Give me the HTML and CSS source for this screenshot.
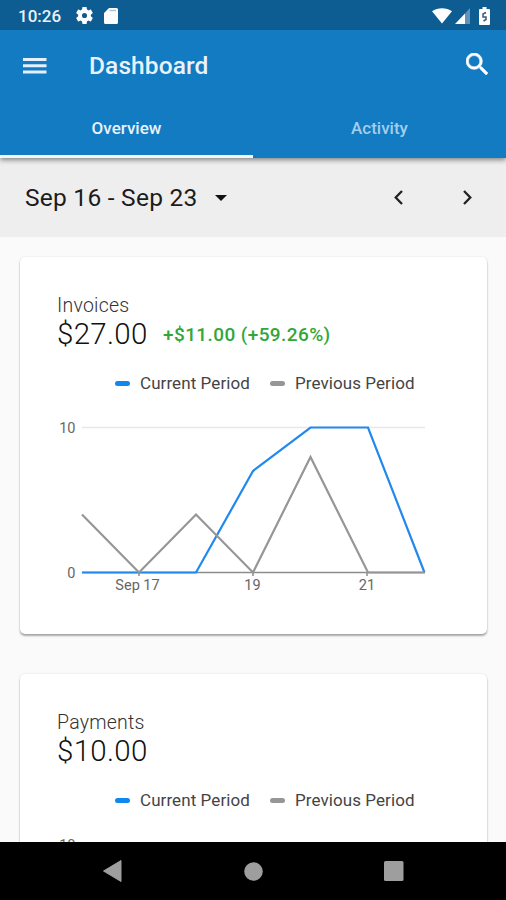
FILE: index.html
```html
<!DOCTYPE html>
<html lang="en">
<head>
    <meta charset="UTF-8">
    <meta name="viewport" content="width=device-width, initial-scale=1.0">
    <title>Dashboard</title>
    <link rel="stylesheet" href="styles.css">
</head>
<body>

<div class="screen">
    <div class="status-bar">
        <span class="time">10:26</span>
        <svg class="gear" width="17" height="17" viewBox="2 2 20 20"><path fill="#fff" d="M19.43 12.98c.04-.32.07-.64.07-.98s-.03-.66-.07-.98l2.11-1.65c.19-.15.24-.42.12-.64l-2-3.46c-.12-.22-.39-.3-.61-.22l-2.49 1c-.52-.4-1.08-.73-1.69-.98l-.38-2.65C14.46 2.18 14.25 2 14 2h-4c-.25 0-.46.18-.49.42l-.38 2.65c-.61.25-1.17.59-1.69.98l-2.49-1c-.23-.09-.49 0-.61.22l-2 3.46c-.13.22-.07.49.12.64l2.11 1.65c-.04.32-.07.65-.07.98s.03.66.07.98l-2.11 1.65c-.19.15-.24.42-.12.64l2 3.46c.12.22.39.3.61.22l2.49-1c.52.4 1.08.73 1.69.98l.38 2.65c.03.24.24.42.49.42h4c.25 0 .46-.18.49-.42l.38-2.65c.61-.25 1.17-.59 1.69-.98l2.49 1c.23.09.49 0 .61-.22l2-3.46c.12-.22.07-.49-.12-.64zM12 15a3 3 0 1 1 0-6 3 3 0 0 1 0 6z"/></svg>
        <svg class="sd" width="14" height="16" viewBox="0 0 14 16"><path fill="#fff" d="M5 0h7.500A1.500 1.500 0 0 1 14 1.500v13a1.500 1.500 0 0 1-1.500 1.500h-11A1.500 1.500 0 0 1 0 14.500V5z"/><path stroke="#a9c4da" stroke-width="1.500" d="M5.500 2.500h6.500"/></svg>
        <div class="status-right">
            <svg width="20" height="16" viewBox="0 0 20 16"><path fill="#fff" d="M0 3.200C5.500-.9 14.500-.9 20 3.200L10 15.500z"/></svg>
            <svg width="15" height="16" viewBox="0 0 15 16"><path fill="#fff" d="M0 16L10 5.500V16z"/><path fill="#5f93bb" d="M10 5.500L15 0v16h-5z"/></svg>
            <svg class="battery" width="11" height="18" viewBox="0 0 11 18"><path fill="#fff" d="M3.500 0h4v2H10a1 1 0 0 1 1 1v14a1 1 0 0 1-1 1H1a1 1 0 0 1-1-1V3a1 1 0 0 1 1-1h2.500z"/><path fill="none" stroke="#3d5a80" stroke-width="1.500" d="M7 5.500L4 7v3h3v2.500L4.500 14"/></svg>
        </div>
    </div>

    <div class="app-bar">
        <svg width="24" height="16" viewBox="0 0 24 16"><path fill="#e6f0fa" d="M0 0h23.500v3H0zM0 6.300h23.500v3H0zM0 12.600h23.500v3H0z"/></svg>
        <h1 class="app-title">Dashboard</h1>
        <svg class="search" width="22" height="22" viewBox="3 3 17.500 17.500"><path fill="#fff" stroke="#fff" stroke-width=".5" d="M15.500 14h-.79l-.28-.27A6.471 6.471 0 0 0 16 9.500 6.500 6.500 0 1 0 9.500 16c1.610 0 3.090-.59 4.230-1.570l.27.28v.79l5 4.990L20.490 19l-4.990-5zm-6 0C7.010 14 5 11.990 5 9.500S7.010 5 9.500 5 14 7.010 14 9.500 11.990 14 9.500 14z"/></svg>
    </div>

    <div class="tabs">
        <div class="tab active">Overview</div>
        <div class="tab">Activity</div>
    </div>

    <div class="date-bar">
        <span class="date-range">Sep 16 - Sep 23</span>
        <svg class="caret" width="12" height="6" viewBox="0 0 12 6"><path fill="#111" d="M0 0h12L6 6z"/></svg>
        <svg class="prev" width="9" height="15" viewBox="0 0 9 15"><path fill="none" stroke="#222" stroke-width="2.300" d="M8 1L1.700 7.500 8 14"/></svg>
        <svg class="next" width="9" height="15" viewBox="0 0 9 15"><path fill="none" stroke="#222" stroke-width="2.300" d="M1 1l6.300 6.500L1 14"/></svg>
    </div>

    <div class="content">
        <div class="card">
            <p class="card-label">Invoices</p>
            <div class="card-total">
                <span class="amount">$27.00</span>
                <span class="change">+$11.00 (+59.26%)</span>
            </div>
            <div class="legend">
                <span class="key current"></span>Current Period
                <span class="key previous"></span>Previous Period
            </div>
            <svg class="chart" width="393" height="180" viewBox="0 0 393 180">
                <path class="grid" d="M25 13.500h343"/>
                <path class="axis" d="M25 158.500h343"/>
                <path class="tick" d="M82 158v4M196 158v4M310 158v4"/>
                <polyline class="line-current" points="25,158.500 139,158.500 196,57 253.500,13.500 311,13.500 367.500,158.500"/>
                <polyline class="line-previous" points="25,100.500 82,158.500 139,100.500 196,158.500 253.500,43 311,158.500 368,158.500"/>
                <text x="18.500" y="18.500" text-anchor="end">10</text>
                <text x="18.500" y="163.500" text-anchor="end">0</text>
                <text x="80.500" y="175.500" text-anchor="middle">Sep 17</text>
                <text x="195.500" y="175.500" text-anchor="middle">19</text>
                <text x="310" y="175.500" text-anchor="middle">21</text>
            </svg>
        </div>

        <div class="card">
            <p class="card-label">Payments</p>
            <div class="card-total">
                <span class="amount">$10.00</span>
            </div>
            <div class="legend">
                <span class="key current"></span>Current Period
                <span class="key previous"></span>Previous Period
            </div>
            <svg class="chart" width="393" height="180" viewBox="0 0 393 180">
                <path class="grid" d="M25 13.500h343"/>
                <text x="18.500" y="18.500" text-anchor="end">10</text>
            </svg>
        </div>
    </div>

    <div class="nav-bar">
        <svg width="19" height="22" viewBox="0 0 19 22"><path fill="#9e9e9e" d="M18 .5v21L.5 11z" stroke="#9e9e9e" stroke-linejoin="round"/></svg>
        <svg width="19" height="19" viewBox="0 0 19 19"><circle cx="9.500" cy="9.500" r="9.300" fill="#9e9e9e"/></svg>
        <svg width="20" height="20" viewBox="0 0 20 20"><rect width="19.500" height="20" rx="1.500" fill="#9e9e9e"/></svg>
    </div>
</div>

</body>
</html>
```
FILE: styles.css
```css
* {
    box-sizing: border-box;
}
body {
    margin: 0;
    font-family: Roboto, sans-serif;
    background-color: #fafafa;
}
svg {
    display: block;
    flex-shrink: 0;
}
.screen {
    display: flex;
    flex-direction: column;
    height: 900px;
    width: 506px;
    overflow: hidden;
}
.status-bar {
    display: flex;
    align-items: center;
    height: 30px;
    padding: 1px 16px 0 18px;
    background-color: #0d5c92;
    flex-shrink: 0;
}
.time {
    width: 44px;
    font-size: 17px;
    font-weight: 500;
    color: #e9f2fa;
}
.gear {
    margin-left: 14px;
}
.sd {
    margin-left: 11px;
}
.status-right {
    display: flex;
    align-items: center;
    gap: 3px;
    margin-left: auto;
}
.battery {
    margin-left: 6px;
}
.app-bar {
    display: flex;
    align-items: center;
    height: 71px;
    padding: 0 18px 0 23px;
    background-color: #127bc2;
    flex-shrink: 0;
    position: relative;
    z-index: 2;
}
.app-title {
    margin: 0 0 0 42px;
    font-size: 24.5px;
    font-weight: 500;
    letter-spacing: 0.1px;
    color: #e9f2fb;
}
.search {
    margin-left: auto;
    margin-top: -3px;
}
.tabs {
    display: flex;
    height: 57px;
    background-color: #127bc2;
    box-shadow: 0 2px 5px rgba(0, 0, 0, 0.45);
    flex-shrink: 0;
    z-index: 1;
}
.tab {
    flex: 1;
    padding-top: 17px;
    font-size: 17px;
    line-height: 20px;
    font-weight: 500;
    text-align: center;
    color: #a5cdec;
}
.tab.active {
    color: #e9f2fb;
    border-bottom: 3px solid #f5f5f5;
}
.date-bar {
    display: flex;
    align-items: center;
    height: 79px;
    padding: 0 34px 0 25px;
    background-color: #eeeeee;
    flex-shrink: 0;
}
.date-range {
    width: 173px;
    font-size: 24.5px;
    letter-spacing: 0.25px;
    color: #1c1c1c;
    white-space: nowrap;
}
.caret {
    margin-left: 17px;
}
.prev {
    margin-left: auto;
}
.next {
    margin-left: 60px;
}
.content {
    flex: 1;
    min-height: 0;
    padding: 20px 19px 0 20px;
    overflow: hidden;
}
.card {
    height: 377px;
    margin-bottom: 40px;
    padding: 38px 37px 0;
    background-color: #fff;
    border-radius: 5px;
    box-shadow: 0 2px 2px rgba(0, 0, 0, 0.32), 0 0 2px rgba(0, 0, 0, 0.12);
}
.card-label {
    margin: 0;
    font-size: 19.5px;
    font-weight: 300;
    letter-spacing: 0.25px;
    line-height: 22px;
    color: #333;
}
.card-total {
    display: flex;
    align-items: center;
    height: 34px;
}
.amount {
    width: 106px;
    font-size: 29.5px;
    font-weight: 300;
    letter-spacing: 0.3px;
    color: #111;
}
.change {
    font-size: 19px;
    font-weight: 500;
    letter-spacing: 0.4px;
    color: #33a63a;
    white-space: nowrap;
}
.legend {
    display: flex;
    align-items: center;
    height: 20px;
    margin: 22px 0 0 58px;
    font-size: 17px;
    letter-spacing: 0.08px;
    color: #444;
    white-space: nowrap;
}
.key {
    width: 15px;
    height: 5px;
    margin-right: 10px;
    border-radius: 2.5px;
}
.key.current {
    background-color: #1088ec;
}
.key.previous {
    margin-left: 20px;
    background-color: #969696;
}
.chart {
    margin-top: 21px;
}
.chart text {
    font-size: 14.5px;
    fill: #666;
}
.grid {
    stroke: #e8e8e8;
    stroke-width: 1.5;
}
.axis,
.tick {
    stroke: #8c8c8c;
    stroke-width: 1.5;
}
.line-current,
.line-previous {
    fill: none;
    stroke-width: 2.2;
}
.line-current {
    stroke: #2189ee;
}
.line-previous {
    stroke: #969696;
}
.nav-bar {
    display: flex;
    justify-content: space-between;
    align-items: center;
    height: 58px;
    padding: 0 102px 0 103px;
    background-color: #000;
    flex-shrink: 0;
}
```
